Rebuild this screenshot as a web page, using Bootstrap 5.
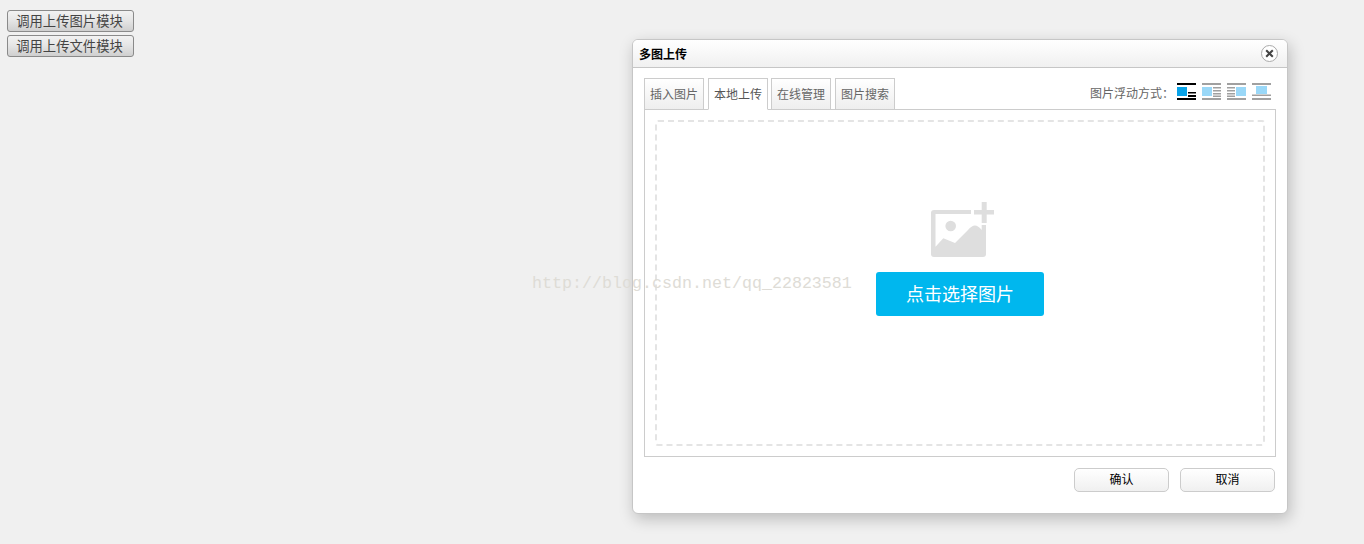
<!DOCTYPE html>
<html lang="zh">
<head>
<meta charset="utf-8">
<title>多图上传</title>
<link href="https://cdn.jsdelivr.net/npm/bootstrap@5.3.0/dist/css/bootstrap.min.css" rel="stylesheet">
<style>
html,body{height:100%;}
body{background:#f0f0f0;font-family:"Liberation Sans","Noto Sans CJK SC",sans-serif;font-size:12px;color:#555;overflow:hidden;}
.page-btns{padding:10px 0 0 7px;gap:3px;}
.legacy-btn{width:127px;height:22px;padding:0 2px 0 0;font-size:13.33px;line-height:22px;color:#444;border:1px solid #8a8a8a;border-radius:3px;background:linear-gradient(#f2f2f2,#e6e6e6 45%,#cfcfcf);}
.dlg{position:absolute;left:632px;top:39px;width:656px;height:475px;background:#fff;border:1px solid #c6c6c6;border-radius:6px;box-shadow:2px 5px 15px rgba(0,0,0,.22);}
.dlg-head{height:28px;padding:0 9px 0 6px;border-bottom:1px solid #c6c6c6;border-radius:5px 5px 0 0;background:linear-gradient(#fff,#f0f0f0);font-size:12px;font-weight:700;color:#000;}
.dlg-title{padding-top:2px;}
.dlg-x{width:17px;height:17px;border-radius:50%;border:1px solid #aaa;background:#fff;color:#444;padding:0;}
.dlg-top{height:41px;padding:10px 16px 0 11px;}
.tabs-row{gap:4px;margin-bottom:-1px;}
.tab-item{width:60px;height:32px;line-height:32px;text-align:center;font-size:12px;color:#666;border:1px solid #ccc;background:linear-gradient(#fff,#eee);}
.tab-item:nth-child(3){margin-left:-1px;}
.tab-item.on{background:#fff;border-bottom-color:#fff;position:relative;z-index:1;color:#555;}
.float-label{font-size:12px;color:#666;margin-right:3px;line-height:14px;padding-top:9px;}
.float-row{gap:6px;padding-top:5px;}
.float-row svg{display:block;}
.panel-box{width:632px;height:348px;margin-left:11px;border:1px solid #ccc;padding:10px 10px 10px;}
.drop-zone{height:326px;border:2px dashed #e4e4e4;border-radius:3px;padding-top:80px;}
.pick-btn{width:168px;height:44px;margin-top:14px;padding:2px 0 0;background:#00b7ee;border:0;border-radius:3px;color:#fff;font-size:18px;line-height:42px;}
.dlg-foot{padding:11px 12px 0 0;gap:11px;}
.foot-btn{width:95px;height:24px;padding:0;font-size:12px;line-height:22px;color:#000;border:1px solid #ccc;border-radius:5px;background:linear-gradient(#fff,#f0f0f0);}
.mark-text{position:absolute;left:532px;top:273px;font-family:"Liberation Mono",monospace;font-size:16.67px;line-height:22px;color:#dedcd6;white-space:nowrap;pointer-events:none;z-index:5;}
</style>
</head>
<body>
<div class="page-btns d-flex flex-column align-items-start">
  <button class="legacy-btn" type="button">调用上传图片模块</button>
  <button class="legacy-btn" type="button">调用上传文件模块</button>
</div>

<div class="dlg">
  <div class="dlg-head d-flex align-items-center justify-content-between">
    <span class="dlg-title">多图上传</span>
    <button class="dlg-x d-flex align-items-center justify-content-center" type="button" aria-label="关闭">
      <svg width="9" height="9" viewBox="0 0 9 9"><path d="M1.2 1.2 7.8 7.8M7.8 1.2 1.2 7.8" stroke="#444" stroke-width="2"/></svg>
    </button>
  </div>
  <div class="dlg-top d-flex justify-content-between align-items-start">
    <div class="tabs-row d-flex">
      <div class="tab-item">插入图片</div>
      <div class="tab-item on">本地上传</div>
      <div class="tab-item">在线管理</div>
      <div class="tab-item">图片搜索</div>
    </div>
    <div class="d-flex align-items-start">
      <span class="float-label">图片浮动方式：</span>
      <div class="float-row d-flex">
        <svg width="19" height="17" viewBox="0 0 19 17"><rect width="19" height="2" fill="#000"/><rect y="15" width="19" height="2" fill="#000"/><rect y="4" width="10" height="9" fill="#09a3e8"/><rect x="11" y="9" width="8" height="1.5" fill="#000"/><rect x="11" y="12" width="8" height="2" fill="#000"/></svg>
        <svg width="19" height="17" viewBox="0 0 19 17"><g fill="#a0a0a0"><rect width="19" height="2"/><rect y="15" width="19" height="2"/><rect x="11" y="4" width="8" height="1.5"/><rect x="11" y="7" width="8" height="1.5"/><rect x="11" y="10" width="8" height="1.5"/><rect x="11" y="12.5" width="8" height="1.5"/></g><rect y="4" width="10" height="9" fill="#9ad8f8"/></svg>
        <svg width="19" height="17" viewBox="0 0 19 17"><g fill="#a0a0a0"><rect width="19" height="2"/><rect y="15" width="19" height="2"/><rect y="4" width="8" height="1.5"/><rect y="7" width="8" height="1.5"/><rect y="10" width="8" height="1.5"/><rect y="12.5" width="8" height="1.5"/></g><rect x="9" y="4" width="10" height="9" fill="#9ad8f8"/></svg>
        <svg width="19" height="17" viewBox="0 0 19 17"><g fill="#a0a0a0"><rect width="19" height="2"/><rect y="11.500" width="19" height="1.500"/><rect y="15" width="19" height="2"/></g><rect x="4" y="3" width="11" height="8" fill="#9ad8f8"/></svg>
      </div>
    </div>
  </div>
  <div class="panel-box">
    <div class="drop-zone d-flex flex-column align-items-center">
      <svg width="68" height="56" viewBox="-5 0 68 56" class="d-block">
        <path fill="#dedede" d="M3 8H40V12H4.500V44.700L12.300 36.300 24 41 37 28C42 22 46 22 50.700 28V23H55V52a3 3 0 0 1-3 3H3a3 3 0 0 1-3-3V11a3 3 0 0 1 3-3z"/>
        <circle cx="19.700" cy="24" r="5.300" fill="#dedede"/>
        <path fill="#dedede" d="M50.700 0h5v8H63v4.500h-7.300V21h-5v-8.500H43V8h7.700z"/>
      </svg>
      <button class="pick-btn" type="button">点击选择图片</button>
    </div>
  </div>
  <div class="dlg-foot d-flex justify-content-end">
    <button class="foot-btn" type="button">确认</button>
    <button class="foot-btn" type="button">取消</button>
  </div>
</div>

<div class="mark-text">http://blog.csdn.net/qq_22823581</div>
<script src="https://cdn.jsdelivr.net/npm/bootstrap@5.3.0/dist/js/bootstrap.bundle.min.js"></script>
</body>
</html>
